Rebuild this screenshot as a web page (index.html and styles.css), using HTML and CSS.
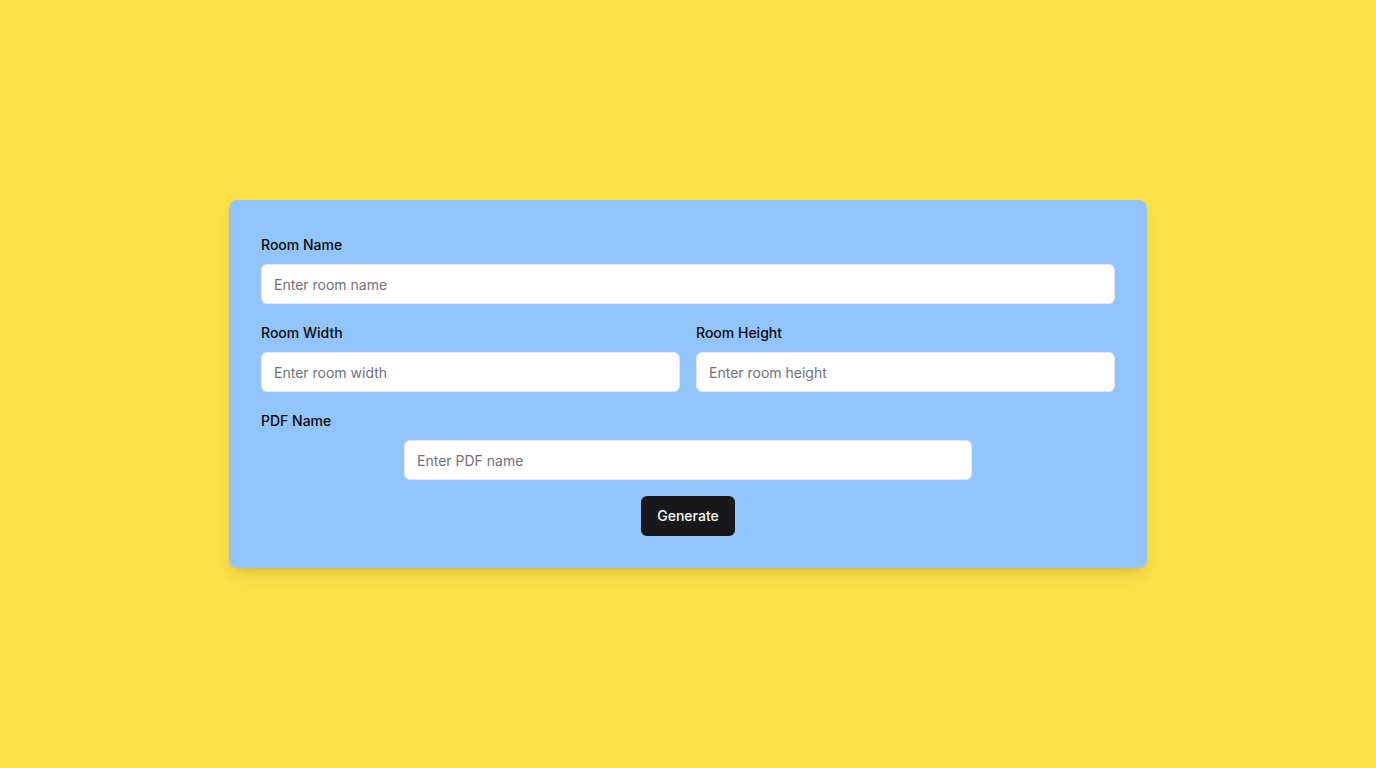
FILE: index.html
```html
<!DOCTYPE html>
<html lang="en">
<head>
<meta charset="utf-8">
<title>Room PDF Generator</title>
<link rel="stylesheet" href="styles.css">
</head>
<body>
<main class="page">
  <form class="card">
    <div class="field">
      <label class="label" for="room-name">Room Name</label>
      <input class="input" id="room-name" type="text" placeholder="Enter room name">
    </div>
    <div class="row">
      <div class="field">
        <label class="label" for="room-width">Room Width</label>
        <input class="input" id="room-width" type="text" placeholder="Enter room width">
      </div>
      <div class="field">
        <label class="label" for="room-height">Room Height</label>
        <input class="input" id="room-height" type="text" placeholder="Enter room height">
      </div>
    </div>
    <div class="field">
      <label class="label" for="pdf-name">PDF Name</label>
      <input class="input input-narrow" id="pdf-name" type="text" placeholder="Enter PDF name">
    </div>
    <div class="actions">
      <button class="button" type="button">Generate</button>
    </div>
  </form>
</main>
</body>
</html>
```

FILE: styles.css
```css
* { box-sizing: border-box; }
html, body { margin: 0; padding: 0; }
body {
  background: #fde047;
  font-family: Inter, "Noto Sans", sans-serif;
  color: #09090b;
}
.page {
  min-height: 768px;
  display: flex;
  align-items: center;
  justify-content: center;
}
.card {
  width: 918px;
  background: #93c5fd;
  border-radius: 8px;
  padding: 32px;
  display: flex;
  flex-direction: column;
  gap: 16px;
  box-shadow: 0 10px 15px -3px rgba(0,0,0,0.1), 0 4px 6px -4px rgba(0,0,0,0.1);
}
.field {
  display: flex;
  flex-direction: column;
  gap: 8px;
}
.row {
  display: grid;
  grid-template-columns: 1fr 1fr;
  gap: 16px;
}
.label {
  font-size: 14px;
  font-weight: 500;
  line-height: 23px;
  padding-top: 1px;
}
.input {
  height: 40px;
  width: 100%;
  border: 1px solid #e4e4e7;
  border-radius: 6px;
  background: #fff;
  padding: 0 12px;
  font-family: inherit;
  font-size: 14px;
  color: #09090b;
  outline: none;
}
.input::placeholder { color: #71717a; }
.input-narrow {
  width: 568px;
  align-self: center;
}
.actions {
  display: flex;
  justify-content: center;
}
.button {
  height: 40px;
  padding: 0 16px 1px;
  border: none;
  border-radius: 6px;
  background: #18181b;
  color: #fafafa;
  font-family: inherit;
  font-size: 14px;
  font-weight: 500;
  cursor: pointer;
}
```
